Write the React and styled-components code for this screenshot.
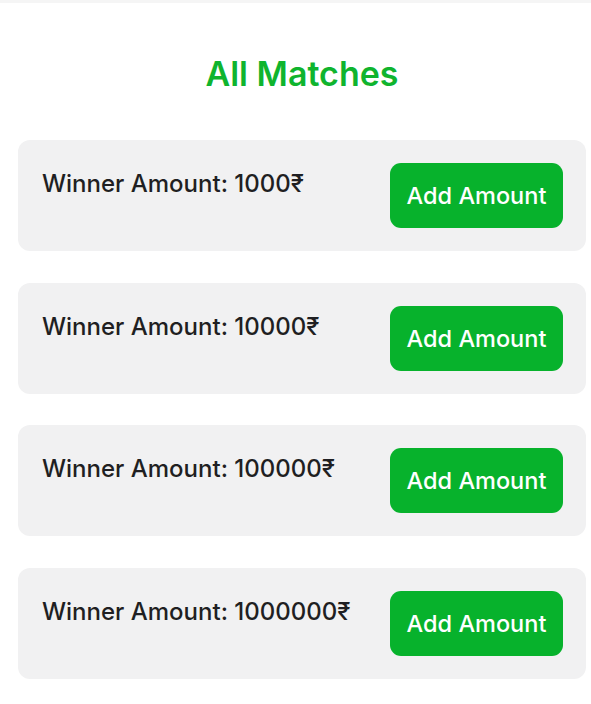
import styled, { createGlobalStyle } from "styled-components"

const Global = createGlobalStyle`
body{
    margin: 0;
    background: #ffffff;
    font-family: Inter, "Noto Sans", "DejaVu Sans", sans-serif;
}
`

const matches = [1000, 10000, 100000, 1000000]

export default function App(){
    return(<><Global />
    <Page>
        <Title>All Matches</Title>
        <List>
            {matches.map(m => (
                <Card key={m}>
                    <Amount>Winner Amount: {m}₹</Amount>
                    <Button>Add Amount</Button>
                </Card>
            ))}
        </List>
    </Page></>)
}

export const Page = styled.div`
border-top: 3px solid #f5f5f5;
padding: 0 5px 0 18px;
`

export const Title = styled.h1`
margin: 51px 0 0;
text-align: center;
font-size: 34px;
line-height: 40px;
font-weight: 600;
color: #0fb42e;
`

export const List = styled.div`
display: flex;
flex-direction: column;
gap: 31.5px;
margin-top: 46px;
`

export const Card = styled.div`
display: flex;
justify-content: space-between;
align-items: center;
height: 111px;
box-sizing: border-box;
padding: 0 23px 0 24px;
background: #f1f1f2;
border-radius: 12px;
`

export const Amount = styled.p`
align-self: flex-start;
margin: 30px 0 0;
font-size: 24px;
line-height: 28px;
font-weight: 500;
color: #1f1f22;
`

export const Button = styled.button`
width: 173px;
height: 65px;
border: none;
border-radius: 11px;
background: #07b22c;
color: #ffffff;
font-family: inherit;
font-size: 23.5px;
font-weight: 500;
`
